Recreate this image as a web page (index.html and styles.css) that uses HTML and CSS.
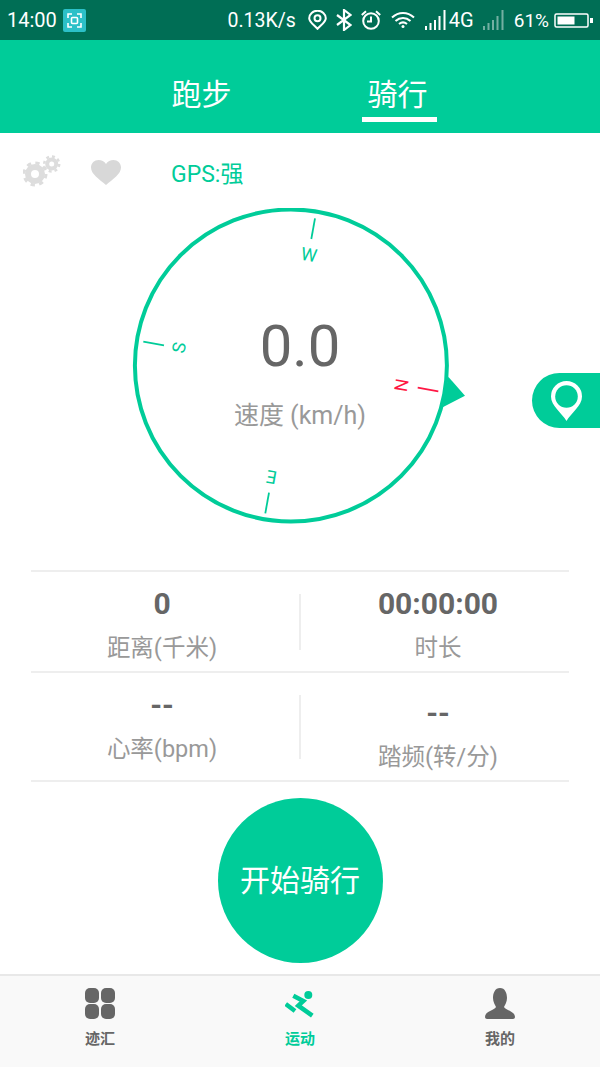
FILE: index.html
```html
<!doctype html>
<html>
  <head>
    <title>运动</title>
    <meta name="viewport" content="width = device-width, initial-scale = 1" />
    <link rel="stylesheet" href="styles.css">
  </head>
  <body>
    <div id="app">
      <div id="statusbar">
        <span class="clock">14:00</span>
        <svg class="shot" width="23" height="23" viewBox="0 0 23 23">
          <rect width="23" height="23" rx="2" fill="#2cc0c8" />
          <path d="M5 9V5h4M14 5h4v4M18 14v4h-4M9 18H5v-4" fill="none" stroke="#fff" stroke-width="1.6" />
          <rect x="8.5" y="8.5" width="6" height="6" rx="1" fill="none" stroke="#fff" stroke-width="1.6" />
        </svg>
        <span class="speed">0.13K/s</span>
        <svg class="tight" width="19" height="20" viewBox="0 0 19 20">
          <path d="M9.500 18.800C6 15 1.200 12 1.200 8.200a8.300 7.500 0 0 1 16.600 0c0 3.800-4.800 6.800-8.300 10.600z" fill="none" stroke="#fff" stroke-width="2" />
          <circle cx="9.500" cy="8.200" r="3" fill="none" stroke="#fff" stroke-width="2" />
        </svg>
        <svg class="tight" width="16" height="22" viewBox="0 0 16 22">
          <path d="M1 6L14.500 16l-6.500 5V1l6.500 5L1 16" fill="none" stroke="#fff" stroke-width="2.200" />
        </svg>
        <svg width="20" height="20" viewBox="0 0 20 20">
          <circle cx="10" cy="11" r="7.800" fill="none" stroke="#fff" stroke-width="2" />
          <path d="M10 6.500V11.500H6M.8 5L5 1.200M19.200 5L15 1.200" fill="none" stroke="#fff" stroke-width="2" />
        </svg>
        <svg width="24" height="16" viewBox="0 0 24 16">
          <path d="M1 5.500C7.500 -.5 16.500 -.5 23 5.500M4.500 9C9 5 15 5 19.500 9M8 12c2.500-2 5.500-2 8 0" fill="none" stroke="#fff" stroke-width="2" />
          <circle cx="12" cy="14.500" r="1.500" fill="#fff" />
        </svg>
        <span class="signal">
          <svg width="22" height="20" viewBox="0 0 22 20">
            <path d="M1 20v-4M5.500 20v-7M10 20v-10M14.500 20v-14M19.500 20V0" stroke="#fff" stroke-width="2" />
          </svg>
          <span>4G</span>
        </span>
        <svg class="dim" width="21" height="20" viewBox="0 0 21 20">
          <path d="M1 20v-4M5.500 20v-7M10 20v-10M14.500 20v-14M19.500 20V0" stroke="#fff" stroke-width="2" />
        </svg>
        <span class="battery">
          <span>61%</span>
          <svg width="39" height="15" viewBox="0 0 39 15">
            <rect x="1" y="1" width="33" height="13" rx="1.500" fill="none" stroke="#fff" stroke-width="1.500" />
            <rect x="3.500" y="3.500" width="17" height="8" fill="#fff" />
            <rect x="36" y="5" width="3" height="5" fill="#fff" />
          </svg>
        </span>
      </div>

      <div id="tabs">
        <a class="tab">跑步</a>
        <a class="tab current">骑行</a>
      </div>

      <div id="toolbar">
        <svg class="gears" width="38" height="34" viewBox="0 0 38 34">
          <circle cx="12" cy="19" r="7" fill="none" stroke="#ddd" stroke-width="6" />
          <circle cx="12" cy="19" r="11" fill="none" stroke="#ddd" stroke-width="3" stroke-dasharray="4.320 4.320" />
          <circle cx="28.700" cy="9" r="4.500" fill="none" stroke="#ddd" stroke-width="4" />
          <circle cx="28.700" cy="9" r="7.500" fill="none" stroke="#ddd" stroke-width="2.500" stroke-dasharray="2.950 2.950" />
        </svg>
        <svg class="heart" width="30" height="25" viewBox="0 0 30 25">
          <path d="M15 25C8 19 0 14 0 7.500 0 3 3.500 0 7.500 0 10.500 0 13.500 1.500 15 4 16.500 1.500 19.500 0 22.500 0 26.500 0 30 3 30 7.500 30 14 22 19 15 25z" fill="#d8d8d8" />
        </svg>
        <span class="gps">GPS:强</span>
      </div>

      <div id="dial">
        <svg width="600" height="362" viewBox="0 208 600 362">
          <polygon points="448.300,376.700 465,395.700 442.700,407.300" fill="#00cc99" />
          <circle cx="290.900" cy="365.500" r="156" fill="#fff" stroke="#00cc99" stroke-width="4" />
          <g stroke="#00cc99" stroke-width="1.800">
            <line x1="315" y1="218.300" x2="311.300" y2="239" />
            <line x1="143.300" y1="341.700" x2="164" y2="345.300" />
            <line x1="269" y1="492.700" x2="265.300" y2="513.300" />
          </g>
          <line x1="417.700" y1="387.700" x2="438.300" y2="391.300" stroke="#ff1744" stroke-width="1.800" />
          <text class="mark" transform="translate(309 255) rotate(10)" y="6">W</text>
          <text class="mark" transform="translate(179.300 347.700) rotate(-80)" y="6">S</text>
          <text class="mark" transform="translate(271.700 476.700) rotate(190)" y="6">E</text>
          <text class="mark north" transform="translate(401 385) rotate(100)" y="6">N</text>
          <text class="reading" x="300" y="365.500">0.0</text>
          <text class="unit" x="300" y="424">速度 (km/h)</text>
        </svg>
        <a id="locate">
          <svg width="31" height="40" viewBox="0 0 31 40">
            <path d="M15.500 40C11 32 0 25 0 15.500a15.500 15.500 0 0 1 31 0C31 25 20 32 15.500 40z" fill="#fff" />
            <circle cx="15.500" cy="15.500" r="11.300" fill="#00cc99" />
          </svg>
        </a>
      </div>

      <div id="stats">
        <div class="row first">
          <div class="cell">
            <b>0</b>
            <span>距离(千米)</span>
          </div>
          <i class="sep"></i>
          <div class="cell">
            <b>00:00:00</b>
            <span>时长</span>
          </div>
        </div>
        <div class="row second">
          <div class="cell">
            <b>--</b>
            <span>心率(bpm)</span>
          </div>
          <i class="sep"></i>
          <div class="cell low">
            <b>--</b>
            <span>踏频(转/分)</span>
          </div>
        </div>
      </div>

      <div id="action">
        <button id="start">开始骑行</button>
      </div>

      <div id="nav">
        <a class="item">
          <svg width="30" height="31" viewBox="0 0 30 31" fill="#666">
            <rect width="14" height="15" rx="5" />
            <rect x="16" width="14" height="15" rx="5" />
            <rect y="16" width="14" height="15" rx="5" />
            <rect x="16" y="16" width="14" height="15" rx="5" />
          </svg>
          <span>迹汇</span>
        </a>
        <a class="item active">
          <svg width="30" height="31" viewBox="0 0 30 31">
            <circle cx="23.300" cy="7" r="4" fill="#00cc99" />
            <path d="M8.300 7.700L18.300 13 13.300 17.700 27.300 27.700M.7 16L10 23" fill="none" stroke="#00cc99" stroke-width="4.500" />
          </svg>
          <span>运动</span>
        </a>
        <a class="item">
          <svg width="30" height="31" viewBox="0 0 30 31" fill="#666">
            <path d="M15 0C20 0 22 5 22 10 22 14 20 17 19 19 20 22 30 23 30 29 30 30 29 31 28 31H2C1 31 0 30 0 29 0 23 10 22 11 19 10 17 8 14 8 10 8 5 10 0 15 0z" />
          </svg>
          <span>我的</span>
        </a>
      </div>
    </div>
  </body>
</html>
```

FILE: styles.css
```css
body,
html {
  height: 100%;
  margin: 0;
  background-color: white;
}

#app {
  display: flex;
  flex-direction: column;
  height: 1067px;
  font-family: Roboto, "Noto Sans CJK SC", sans-serif;
  overflow: hidden;
}

#statusbar {
  display: flex;
  align-items: center;
  gap: 10px;
  height: 40px;
  flex: none;
  padding: 0 7px;
  background-color: #006e55;
  color: white;
  font-size: 20px;
}

.clock {
  margin-right: -4px;
}

.speed {
  margin-left: auto;
  margin-right: 2px;
  font-size: 19.500px;
}

.tight {
  margin-right: -1px;
}

.signal,
.battery {
  display: flex;
  align-items: center;
}

.signal {
  gap: 2px;
  margin-right: -1px;
  font-size: 20px;
}

.battery {
  gap: 5px;
  font-size: 19px;
}

.dim {
  opacity: 0.45;
}

#tabs {
  display: flex;
  height: 93px;
  flex: none;
  padding-left: 164px;
  gap: 73px;
  background-color: #00cc99;
}

.tab {
  display: block;
  width: 75px;
  height: 77px;
  padding-bottom: 5px;
  box-sizing: content-box;
  line-height: 109px;
  text-align: center;
  font-size: 30px;
  color: white;
}

.tab.current {
  height: 77px;
  width: 75px;
  border-bottom: 5px solid white;
  padding-bottom: 0;
  margin-left: 50px;
  text-indent: -4px;
}

#toolbar {
  display: flex;
  align-items: center;
  box-sizing: border-box;
  height: 75px;
  flex: none;
  padding: 3px 0 0 23px;
}

.heart {
  margin-left: 30px;
}

.gps {
  margin-left: 50px;
  font-size: 23px;
  color: #00cc99;
}

#dial {
  position: relative;
  height: 362px;
  flex: none;
}

#dial svg {
  display: block;
}

.mark {
  font-size: 18px;
  text-anchor: middle;
  fill: #00cc99;
}

.mark.north {
  fill: #ff1744;
}

.reading {
  font-size: 58px;
  text-anchor: middle;
  fill: #666;
}

.unit {
  font-size: 25px;
  text-anchor: middle;
  fill: #999;
}

#locate {
  position: absolute;
  top: 165px;
  right: 0;
  display: flex;
  align-items: center;
  width: 68px;
  height: 55px;
  box-sizing: border-box;
  padding-left: 19px;
  border-radius: 28px 0 0 28px;
  background-color: #00cc99;
}

#stats {
  flex: none;
  margin: 0 31px;
  border-top: 2px solid #eee;
}

.row {
  display: flex;
  align-items: center;
  border-bottom: 2px solid #eee;
}

.row.first {
  height: 99px;
}

.row.second {
  height: 107px;
}

.cell {
  flex: 1;
  display: flex;
  flex-direction: column;
  align-items: center;
  align-self: flex-start;
  padding-top: 15px;
  gap: 12px;
}

.cell.low {
  padding-top: 23px;
}

.cell b {
  font-size: 30px;
  line-height: 34px;
  color: #666;
}

.cell span {
  font-size: 23.500px;
  line-height: 30px;
  color: #999;
}

.sep {
  width: 2px;
  height: 56px;
  margin: 0 6px;
  background-color: #eee;
}

.second .sep {
  height: 64px;
}

#action {
  display: flex;
  justify-content: center;
  flex: 1;
  padding-top: 16px;
}

#start {
  width: 165px;
  height: 165px;
  padding: 0 0 5px;
  border: 0;
  border-radius: 50%;
  background-color: #00cc99;
  color: white;
  font-family: inherit;
  font-size: 30px;
}

#nav {
  display: flex;
  box-sizing: border-box;
  height: 93px;
  flex: none;
  border-top: 2px solid #e8e8e8;
  background-color: #f9f9f9;
}

.item {
  flex: 1;
  display: flex;
  flex-direction: column;
  align-items: center;
  padding-top: 12px;
  gap: 10px;
  font-size: 15px;
  font-weight: bold;
  line-height: 20px;
  color: #666;
}

.item.active {
  color: #00cc99;
}
```
